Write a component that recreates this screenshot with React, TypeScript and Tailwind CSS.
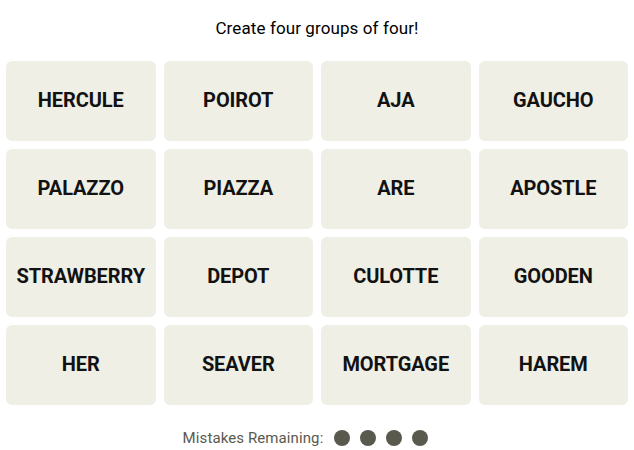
import React from "react";

const words = [
  "HERCULE", "POIROT", "AJA", "GAUCHO",
  "PALAZZO", "PIAZZA", "ARE", "APOSTLE",
  "STRAWBERRY", "DEPOT", "CULOTTE", "GOODEN",
  "HER", "SEAVER", "MORTGAGE", "HAREM",
];

const App = () => {
  return (
    <div className="w-[634px] h-[450px] bg-white font-['Roboto',sans-serif] text-black">
      <p className="pt-[17px] h-[61px] text-center text-[17px] leading-[22px] tracking-[0.1px]">
        Create four groups of four!
      </p>
      <div className="grid grid-cols-4 gap-2 px-[6px]">
        {words.map((w, i) => (
          <button
            key={i}
            className="h-[80px] rounded-md bg-[#efefe6] flex items-center justify-center pb-[2px] text-[20px] font-bold tracking-[-0.1px] text-[#121212]"
          >
            {w}
          </button>
        ))}
      </div>
      <div className="flex items-center justify-center mt-[22px] gap-[11px] pr-[23px]">
        <span className="text-[15px] text-[#5a594e] tracking-[0.1px]">Mistakes Remaining:</span>
        <div className="flex gap-[10px]">
          {[0, 1, 2, 3].map((d) => (
            <span key={d} className="w-4 h-4 rounded-full bg-[#5a594e]" />
          ))}
        </div>
      </div>
    </div>
  );
};

export default App;
